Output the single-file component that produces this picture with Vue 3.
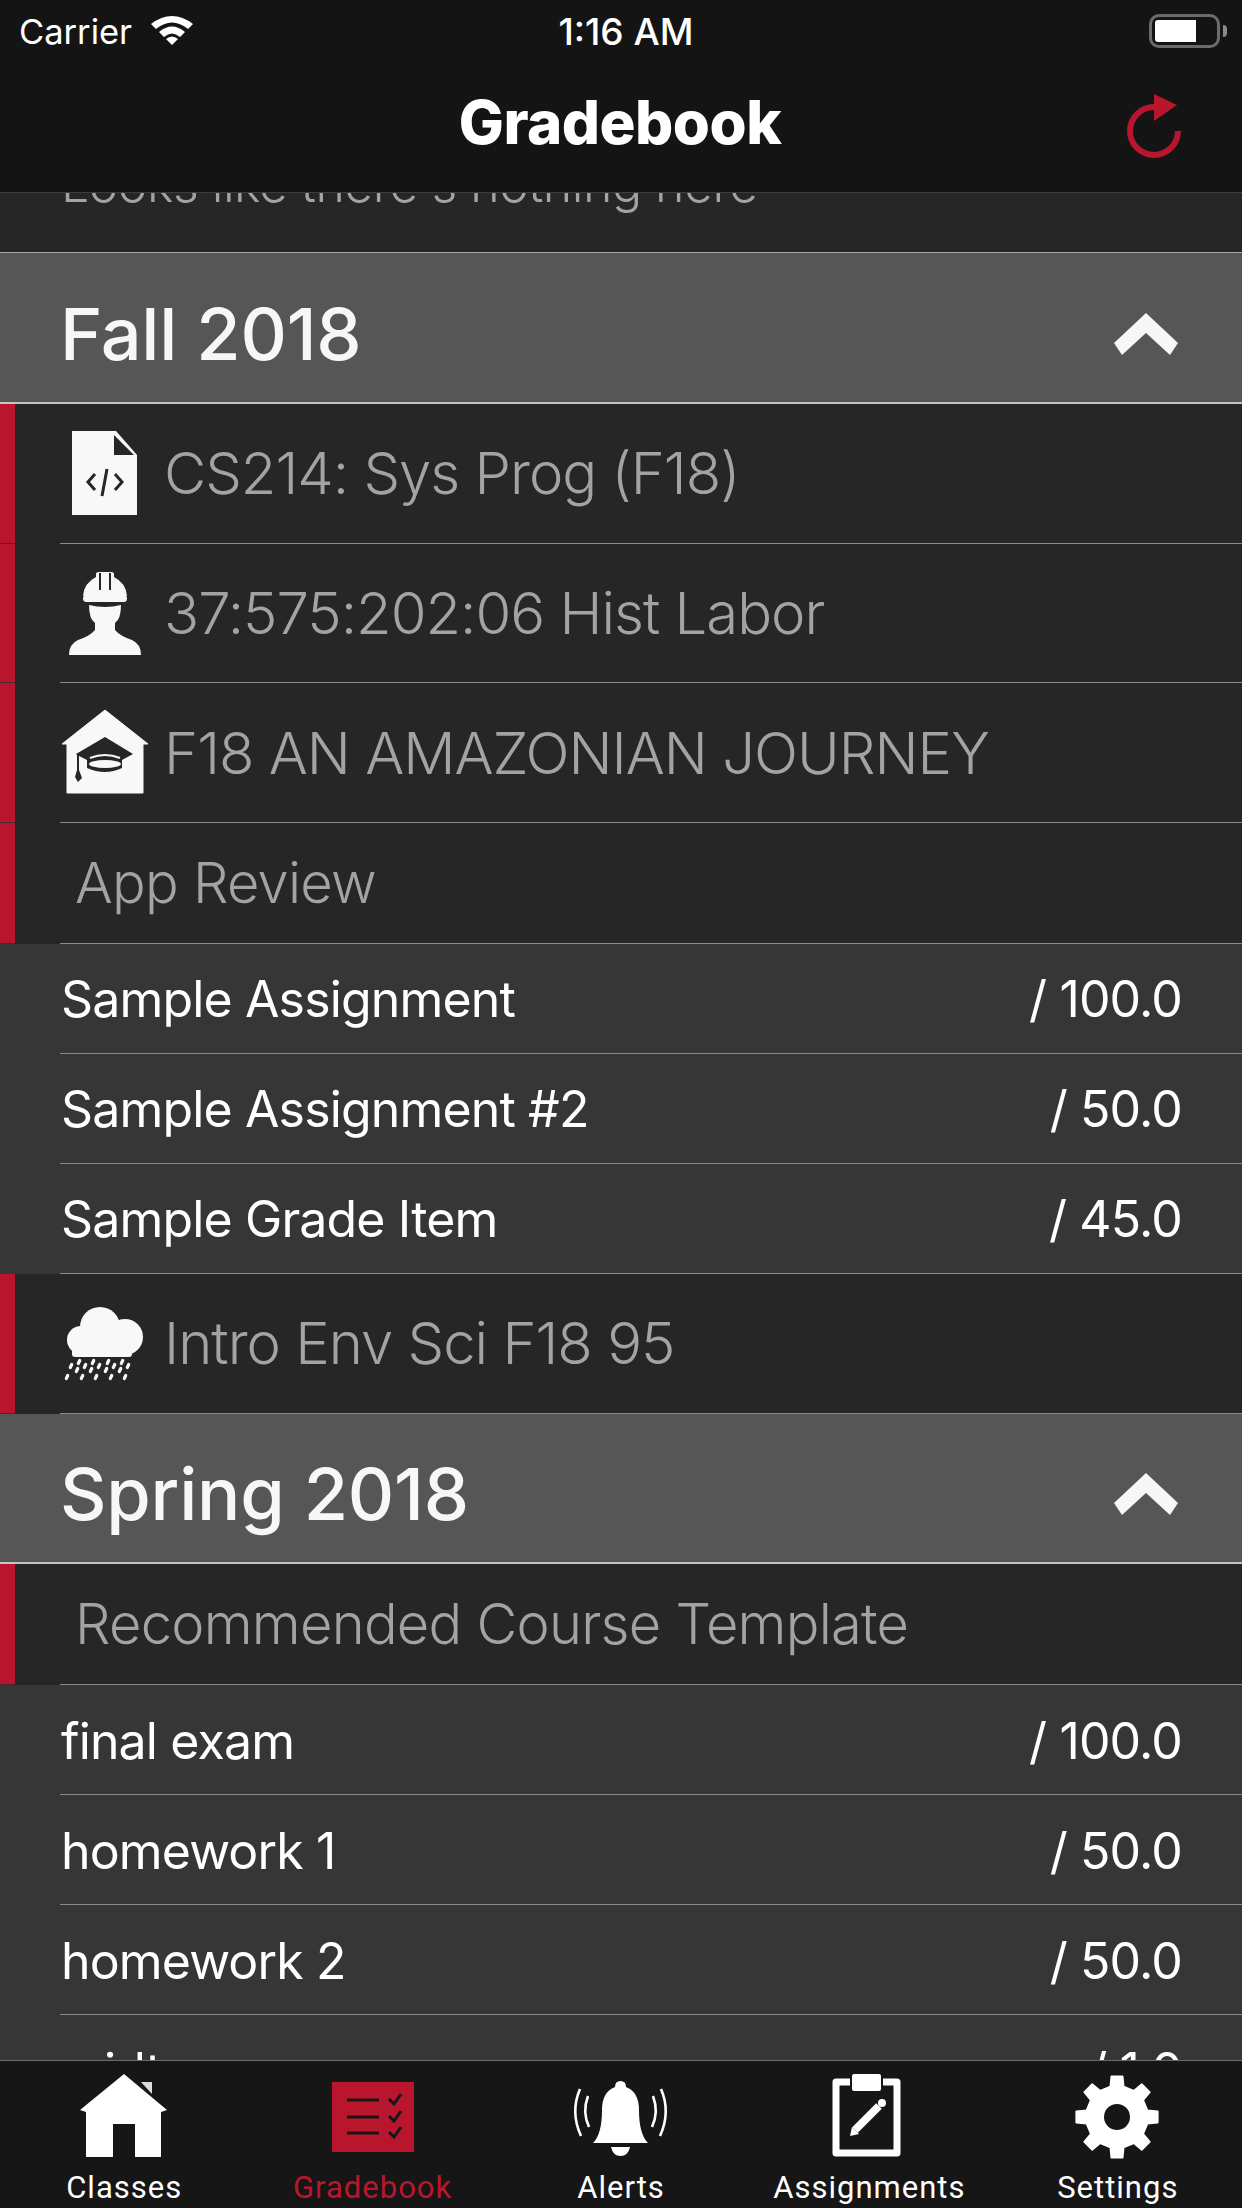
<script setup>
const fall = [
  { kind: 'icon', icon: 'file', name: 'CS214: Sys Prog (F18)' },
  { kind: 'icon', icon: 'worker', name: '37:575:202:06 Hist Labor' },
  { kind: 'icon', icon: 'school', name: 'F18 AN AMAZONIAN JOURNEY' },
]
const review = [
  { name: 'Sample Assignment', score: '/ 100.0' },
  { name: 'Sample Assignment #2', score: '/ 50.0' },
  { name: 'Sample Grade Item', score: '/ 45.0' },
]
const spring = [
  { name: 'final exam', score: '/ 100.0' },
  { name: 'homework 1', score: '/ 50.0' },
  { name: 'homework 2', score: '/ 50.0' },
  { name: 'midterm', score: '/ 1.0' },
]
const drops = [
  [19,69],[33,69],[48,69],[62,69],
  [11,73],[25,73],[39,73],[54,73],[68,73],
  [17,77],[31,77],[46,77],[60,77],
  [7,84],[22,84],[36,84],[51,84],[65,84],
]
function gearPath(cx, cy, outer, inner, teeth) {
  const pts = []
  const step = (Math.PI * 2) / teeth
  for (let i = 0; i < teeth; i++) {
    const a = i * step - Math.PI / 2
    const w = step * 0.17
    const w2 = step * 0.27
    pts.push([a - w2, inner], [a - w, outer], [a + w, outer], [a + w2, inner])
  }
  return 'M' + pts.map(([a, r]) => (cx + r * Math.cos(a)).toFixed(1) + ' ' + (cy + r * Math.sin(a)).toFixed(1)).join('L') + 'Z'
}
const gear = gearPath(54, 45, 41, 31, 8)
</script>

<template>
  <div class="page">
    <header class="top">
      <div class="status">
        <div class="carrier">
          <span>Carrier</span>
          <svg class="wifi" width="44" height="32" viewBox="0 0 44 32">
            <path d="M1 10 Q22 -6 43 10 L38 15 Q22 2 6 15Z" fill="#fff"/>
            <path d="M9 18 Q22 7 35 18 L30 23 Q22 16 14 23Z" fill="#fff"/>
            <path d="M16 25 Q22 20 28 25 L22 31Z" fill="#fff"/>
          </svg>
        </div>
        <div class="clock">1:16 AM</div>
        <div class="battery">
          <div class="battery-shell"><div class="battery-fill"></div></div>
          <div class="battery-nub"></div>
        </div>
      </div>
      <div class="nav">
        <h1 class="title">Gradebook</h1>
        <svg class="refresh" width="60" height="70" viewBox="0 0 60 70">
          <path d="M27 13 A24 24 0 1 0 51 37" fill="none" stroke="#b9162e" stroke-width="6"/>
          <path d="M27 0 L50 11 L27 27Z" fill="#b9162e"/>
        </svg>
      </div>
    </header>

    <main class="scroll">
      <div class="content">
        <div class="empty"><span>Looks like there's nothing here</span></div>

        <section class="term first">
          <span>Fall 2018</span>
          <svg width="64" height="42" viewBox="0 0 64 42"><path d="M32 0 L64 30 L56 42 L32 20 L8 42 L0 30Z" fill="#f7f7f7"/></svg>
        </section>

        <div v-for="c in fall" :key="c.name" class="course">
          <div class="accent"></div>
          <div class="course-body">
            <div class="course-icon">
              <svg v-if="c.icon === 'file'" width="90" height="100" viewBox="0 0 90 100">
                <path d="M12 8 H56 L77 32 V92 H12Z" fill="#f8f8f8"/>
                <path d="M54 12 V32 H74Z" fill="#262626"/>
                <path d="M35 51 L28 59 L35 67 M55 51 L62 59 L55 67 M47 46 L42 73" fill="none" stroke="#262626" stroke-width="3"/>
              </svg>
              <svg v-else-if="c.icon === 'worker'" width="90" height="100" viewBox="0 0 90 100">
                <path d="M23 33 Q24 20 36 14 V11 Q36 9 39 9 H51 Q54 9 54 11 V14 Q66 20 67 33Z" fill="#f8f8f8"/>
                <rect x="23" y="32" width="44" height="7" rx="3.5" fill="#f8f8f8"/>
                <path d="M40 10 V27 M50 10 V27" stroke="#262626" stroke-width="2"/>
                <path d="M29 42 Q45 46 61 42 Q61 56 55 60 V67 Q60 73 72 77 Q81 81 81 92 H9 Q9 81 18 77 Q30 73 35 67 V60 Q29 56 29 42Z" fill="#f8f8f8"/>
              </svg>
              <svg v-else width="90" height="100" viewBox="0 0 90 100">
                <path d="M45 7 L88 41 L83 41 V90 H7 V41 L2 41Z" fill="#f8f8f8" stroke="#f8f8f8" stroke-linejoin="round"/>
                <path d="M45 34 L73 51 L62 57 V65 Q45 73 27 65 V57 L19 53 V67 L22 75 L18 79 L15 74 L17 67 V52 L16 51Z" fill="#262626"/>
                <ellipse cx="45" cy="61" rx="16" ry="4" fill="#f8f8f8"/>
                <path d="M30 55 Q45 49 60 55" fill="none" stroke="#f8f8f8" stroke-width="2"/>
              </svg>
            </div>
            <span class="course-name">{{ c.name }}</span>
          </div>
        </div>

        <div class="course short">
          <div class="accent"></div>
          <div class="course-body"><span class="course-name plain">App Review</span></div>
        </div>
        <div v-for="g in review" :key="g.name" class="grade">
          <div class="grade-body"><span>{{ g.name }}</span><span>{{ g.score }}</span></div>
        </div>

        <div class="course">
          <div class="accent"></div>
          <div class="course-body">
            <div class="course-icon">
              <svg width="90" height="100" viewBox="0 0 90 100">
                <g fill="#f8f8f8">
                  <circle cx="40" cy="34" r="20"/>
                  <circle cx="21" cy="47" r="14"/>
                  <circle cx="65" cy="44" r="18"/>
                  <rect x="12" y="44" width="60" height="20" rx="3"/>
                </g>
                <path v-for="d in drops" :key="d[0] + '-' + d[1]" :d="`M${d[0] + 0.7} ${d[1] - 1.5} L${d[0] - 0.7} ${d[1] + 1.5}`" stroke="#f8f8f8" stroke-width="3.2" stroke-linecap="round"/>
              </svg>
            </div>
            <span class="course-name">Intro Env Sci F18 95</span>
          </div>
        </div>

        <section class="term">
          <span>Spring 2018</span>
          <svg width="64" height="42" viewBox="0 0 64 42"><path d="M32 0 L64 30 L56 42 L32 20 L8 42 L0 30Z" fill="#f7f7f7"/></svg>
        </section>

        <div class="course short">
          <div class="accent"></div>
          <div class="course-body"><span class="course-name plain">Recommended Course Template</span></div>
        </div>
        <div v-for="g in spring" :key="g.name" class="grade">
          <div class="grade-body"><span>{{ g.name }}</span><span>{{ g.score }}</span></div>
        </div>
      </div>
    </main>

    <nav class="tabs">
      <div class="tab">
        <svg width="110" height="90" viewBox="0 0 110 90">
          <path d="M55 2 L98 38 L92 40 V85 H66 V52 H44 V85 H17 V40 L11 38Z" fill="#fff"/>
          <path d="M72 10 H83 V22Z" fill="#ddd"/>
        </svg>
        <span>Classes</span>
      </div>
      <div class="tab active">
        <svg width="110" height="90" viewBox="0 0 110 90">
          <rect x="14" y="10" width="82" height="70" fill="#b9162e"/>
          <path d="M29 28 H61 M29 45 H61 M29 61 H61" stroke="#161616" stroke-width="3.2"/>
          <path d="M71 27 L76 32 L83 22 M71 44 L76 49 L83 39 M71 60 L76 65 L83 55" fill="none" stroke="#161616" stroke-width="3"/>
        </svg>
        <span>Gradebook</span>
      </div>
      <div class="tab">
        <svg width="110" height="90" viewBox="0 0 110 90">
          <path d="M27 71 Q36 62 36 38 Q36 20 49 15 Q49 9 54.500 9 Q60 9 60 15 Q73 20 73 38 Q73 62 82 71Z" fill="#fff"/>
          <path d="M45 75 H64 Q62 84 54.500 84 Q47 84 45 75Z" fill="#fff"/>
          <path d="M14 17 Q4 40 15 64 M22 24 Q16 40 23 55 M95 17 Q105 40 94 64 M87 24 Q93 40 86 55" fill="none" stroke="#fff" stroke-width="2.600"/>
        </svg>
        <span>Alerts</span>
      </div>
      <div class="tab">
        <svg width="110" height="90" viewBox="0 0 110 90">
          <path d="M36 10 H22 V81 H83 V10 H69" fill="none" stroke="#fff" stroke-width="7" stroke-linejoin="round"/>
          <rect x="38" y="2" width="29" height="17" rx="2" fill="#fff"/>
          <path d="M41 58 L65 34" stroke="#fff" stroke-width="8"/>
          <path d="M36 64 L38 55 L45 62Z" fill="#fff"/>
          <circle cx="68" cy="31" r="4" fill="#fff"/>
        </svg>
        <span>Assignments</span>
      </div>
      <div class="tab">
        <svg width="110" height="90" viewBox="0 0 110 90">
          <path :d="gear" fill="#fff" stroke="#fff" stroke-width="2" stroke-linejoin="round"/>
          <circle cx="54" cy="45" r="13" fill="#161616"/>
        </svg>
        <span>Settings</span>
      </div>
    </nav>
  </div>
</template>

<style scoped>
.page {
  width: 1242px;
  height: 2208px;
  display: flex;
  flex-direction: column;
  overflow: hidden;
  background: #363636;
  font-family: Inter, "Liberation Sans", sans-serif;
  color: #fff;
}
.top {
  height: 193px;
  box-sizing: border-box;
  flex: none;
  background: #141414;
  border-bottom: 1px solid #3d3d3d;
  position: relative;
  z-index: 2;
}
.status {
  height: 62px;
  display: grid;
  grid-template-columns: 1fr auto 1fr;
  align-items: center;
  padding: 0 15px 0 19px;
  font-size: 34.5px;
}
.carrier { display: flex; align-items: center; gap: 18px; }
.wifi { margin-top: -2px; }
.clock { margin-left: 6px; font-size: 37px; font-weight: 500; }
.battery { justify-self: end; display: flex; align-items: center; gap: 3px; }
.battery-shell {
  width: 71px;
  height: 34px;
  box-sizing: border-box;
  border: 3px solid #6b6b6b;
  border-radius: 10px;
  padding: 3px;
}
.battery-fill { width: 41px; height: 22px; background: #fff; border-radius: 3px 0 0 3px; }
.battery-nub { width: 4px; height: 12px; background: #8a8a8a; border-radius: 0 4px 4px 0; }
.nav {
  height: 130px;
  display: flex;
  align-items: center;
  justify-content: center;
  position: relative;
}
.title { margin: 0; font-size: 60px; font-weight: 800; letter-spacing: -0.5px; line-height: 1; position: relative; top: -5px; left: -1px; }
.refresh { position: absolute; right: 55px; top: 32px; }
.scroll { flex: 1; min-height: 0; overflow: hidden; }
.content { margin-top: -80px; }
.empty {
  height: 140px;
  box-sizing: border-box;
  background: #262626;
  border-bottom: 1px solid #a8a8a8;
  display: flex;
  align-items: center;
  padding: 2px 0 0 61px;
  font-size: 50px;
  font-weight: 300;
  letter-spacing: -0.5px;
  color: #a3a3a3;
}
.term {
  height: 150.5px;
  box-sizing: border-box;
  background: #565656;
  border-bottom: 2px solid #c4c4c4;
  display: flex;
  align-items: center;
  justify-content: space-between;
  padding: 12px 64px 0 60px;
  font-size: 72px;
  font-weight: 500;
  letter-spacing: -0.2px;
  color: #f7f7f7;
}
.term.first { height: 151px; }
.course {
  display: flex;
  height: 139.67px;
  background: #262626;
}
.course.short { height: 121px; }
.accent {
  width: 15px;
  flex: none;
  background: #b9162e;
  border-bottom: 1px solid #4a2630;
  box-sizing: border-box;
  margin-right: 45px;
}
.course-body {
  flex: 1;
  display: flex;
  align-items: center;
  border-bottom: 1px solid #8a8a8a;
}
.course-icon { width: 90px; height: 100px; flex: none; margin-right: 14px; }
.course-icon svg { display: block; }
.course-name { font-size: 58px; font-weight: 300; letter-spacing: -1px; color: #a3a3a3; white-space: nowrap; }
.course-name.plain { margin-left: 15px; font-size: 56px; letter-spacing: -0.75px; }
.grade { height: 110px; padding-left: 60px; background: #363636; }
.grade-body {
  height: 100%;
  box-sizing: border-box;
  border-bottom: 1px solid #8a8a8a;
  display: flex;
  align-items: center;
  justify-content: space-between;
  padding: 2px 60px 0 1px;
  font-size: 50px;
  letter-spacing: -0.85px;
  color: #fff;
}
.tabs {
  height: 148px;
  box-sizing: border-box;
  flex: none;
  background: #161616;
  border-top: 1px solid #6b6b6b;
  display: grid;
  grid-template-columns: repeat(5, 1fr);
  position: relative;
  z-index: 2;
}
.tab {
  display: flex;
  flex-direction: column;
  align-items: center;
  padding-top: 11px;
  font-family: Roboto, "Noto Sans", sans-serif;
  font-size: 31px;
  letter-spacing: 1px;
  color: #fff;
  white-space: nowrap;
}
.tab svg { display: block; flex: none; }
.tab span { line-height: 36px; margin-top: 8px; }
.tab.active { color: #b9162e; }
</style>
